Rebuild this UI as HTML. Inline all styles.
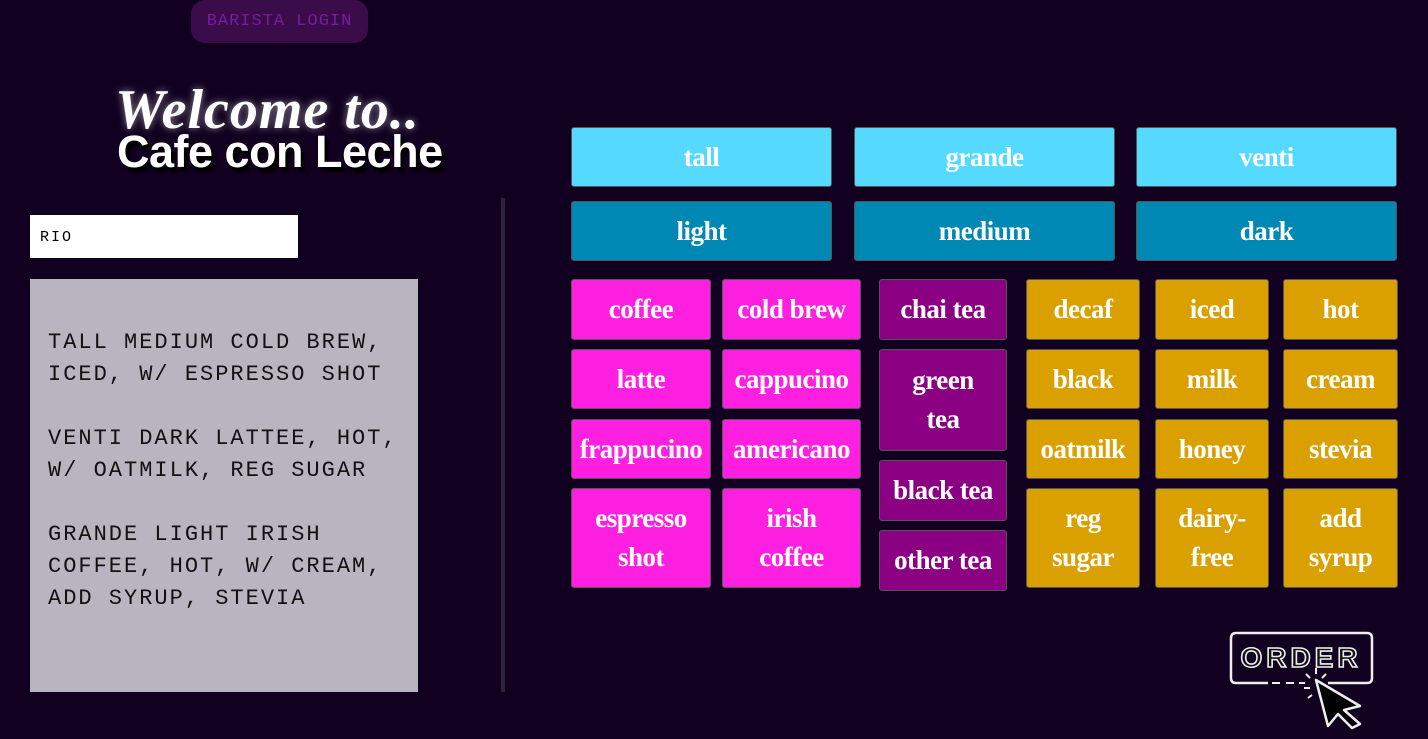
<!DOCTYPE html>
<html><head><meta charset="utf-8"><style>
body{margin:0;width:1428px;height:739px;background:#110020;overflow:hidden;position:relative;font-family:"Liberation Sans",sans-serif}
.b{position:absolute;display:flex;align-items:center;justify-content:center;text-align:center;color:#fff;font-family:"Liberation Serif",serif;font-weight:bold;font-size:27px;line-height:39px;border-radius:3px;border:1px solid #555;box-sizing:border-box;letter-spacing:-0.5px}
.c{background:#55d9ff}.d{background:#0088b4}.m{background:#ff1fe0}.p{background:#8b0082}.g{background:#d9a000}
.hand{font-family:"Liberation Mono",monospace;letter-spacing:2px}
</style></head><body>
<div style="position:absolute;left:191px;top:0;width:177px;height:43px;background:#3a0d4a;border-radius:14px;color:#7a1aa0;font-size:17px;display:flex;align-items:center;justify-content:center;letter-spacing:1px" class="hand">BARISTA LOGIN</div>
<div style="position:absolute;left:115px;top:78px;color:#fff;font-family:'Liberation Serif',serif;font-style:italic;font-weight:bold;font-size:56px;text-shadow:0 0 8px #fff8;letter-spacing:1px">Welcome to..</div>
<div style="position:absolute;left:117px;top:126px;color:#fff;font-weight:bold;font-size:45px;text-shadow:4px 5px 2px #000;letter-spacing:-0.5px">Cafe con Leche</div>
<div style="position:absolute;left:30px;top:215px;width:268px;height:43px;background:#fff;color:#000;font-size:15px;line-height:46px;padding-left:10px;box-sizing:border-box" class="hand">RIO</div>
<div style="position:absolute;left:30px;top:279px;width:388px;height:413px;background:#b8b5c0;color:#111;font-size:22px;line-height:32px;padding:48px 18px;box-sizing:border-box" class="hand">TALL MEDIUM COLD BREW, ICED, W/ ESPRESSO SHOT<br><br>VENTI DARK LATTEE, HOT, W/ OATMILK, REG SUGAR<br><br>GRANDE LIGHT IRISH COFFEE, HOT, W/ CREAM, ADD SYRUP, STEVIA</div>
<div style="position:absolute;left:501px;top:198px;width:4px;height:494px;background:#2e2438"></div>

<div class="b c" style="left:571px;top:127px;width:261px;height:60px">tall</div>
<div class="b c" style="left:854px;top:127px;width:261px;height:60px">grande</div>
<div class="b c" style="left:1136px;top:127px;width:261px;height:60px">venti</div>
<div class="b d" style="left:571px;top:201px;width:261px;height:60px">light</div>
<div class="b d" style="left:854px;top:201px;width:261px;height:60px">medium</div>
<div class="b d" style="left:1136px;top:201px;width:261px;height:60px">dark</div>

<div class="b m" style="left:571px;top:279px;width:140px;height:61px">coffee</div>
<div class="b m" style="left:722px;top:279px;width:139px;height:61px">cold brew</div>
<div class="b m" style="left:571px;top:349px;width:140px;height:60px">latte</div>
<div class="b m" style="left:722px;top:349px;width:139px;height:60px">cappucino</div>
<div class="b m" style="left:571px;top:419px;width:140px;height:60px">frappucino</div>
<div class="b m" style="left:722px;top:419px;width:139px;height:60px">americano</div>
<div class="b m" style="left:571px;top:488px;width:140px;height:100px">espresso<br>shot</div>
<div class="b m" style="left:722px;top:488px;width:139px;height:100px">irish<br>coffee</div>

<div class="b p" style="left:879px;top:279px;width:128px;height:61px">chai tea</div>
<div class="b p" style="left:879px;top:349px;width:128px;height:102px">green<br>tea</div>
<div class="b p" style="left:879px;top:460px;width:128px;height:61px">black tea</div>
<div class="b p" style="left:879px;top:530px;width:128px;height:61px">other tea</div>

<div class="b g" style="left:1026px;top:279px;width:114px;height:61px">decaf</div>
<div class="b g" style="left:1155px;top:279px;width:114px;height:61px">iced</div>
<div class="b g" style="left:1283px;top:279px;width:115px;height:61px">hot</div>
<div class="b g" style="left:1026px;top:349px;width:114px;height:60px">black</div>
<div class="b g" style="left:1155px;top:349px;width:114px;height:60px">milk</div>
<div class="b g" style="left:1283px;top:349px;width:115px;height:60px">cream</div>
<div class="b g" style="left:1026px;top:419px;width:114px;height:60px">oatmilk</div>
<div class="b g" style="left:1155px;top:419px;width:114px;height:60px">honey</div>
<div class="b g" style="left:1283px;top:419px;width:115px;height:60px">stevia</div>
<div class="b g" style="left:1026px;top:488px;width:114px;height:100px">reg<br>sugar</div>
<div class="b g" style="left:1155px;top:488px;width:114px;height:100px">dairy-<br>free</div>
<div class="b g" style="left:1283px;top:488px;width:115px;height:100px">add<br>syrup</div>

<svg style="position:absolute;left:1228px;top:630px" width="150" height="100" viewBox="0 0 150 100">
<path d="M40 53 H8 Q3 53 3 48 V8 Q3 3 8 3 H139 Q144 3 144 8 V48 Q144 53 139 53 H100" fill="none" stroke="#eee" stroke-width="2.5"/>
<path d="M44 53h8M58 53h8M71 53h6" stroke="#eee" stroke-width="2"/>
<text x="73" y="37" text-anchor="middle" font-family="Liberation Sans" font-weight="bold" font-size="28" fill="#111" stroke="#eee" stroke-width="1.6" letter-spacing="4">ORDER</text>
<path d="M88 50 L132 76 L116 80 L132 94 L124 98 L110 84 L100 96 Z" fill="#000" stroke="#eee" stroke-width="2.5" stroke-linejoin="round"/>
<path d="M88 38v6M78 44l4 4M98 44l-4 4M76 58h6M80 68l4-3" stroke="#eee" stroke-width="2"/>
</svg>
</body></html>
